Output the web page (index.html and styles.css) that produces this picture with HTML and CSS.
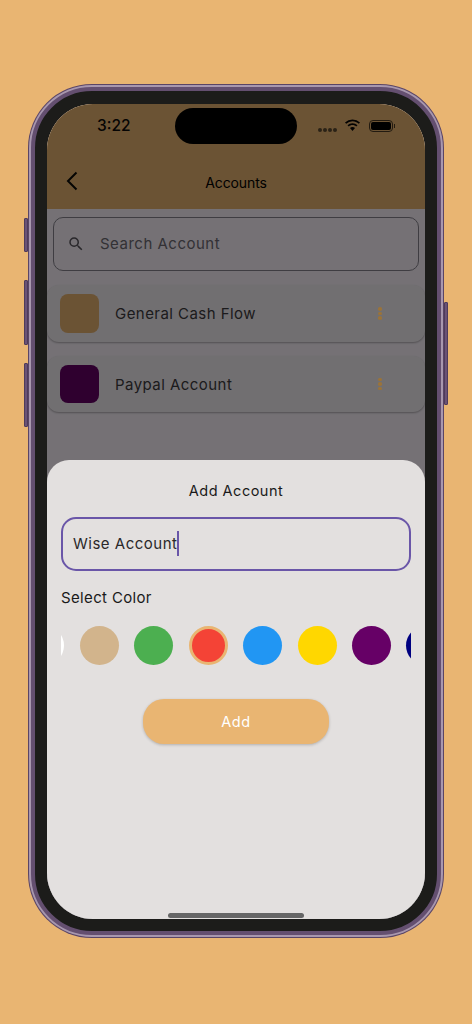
FILE: index.html
```html
<!DOCTYPE html>
<html lang="en">
<head>
<meta charset="utf-8">
<title>Accounts</title>
<link rel="stylesheet" href="styles.css">
</head>
<body>
<div class="phone">
  <span class="side-btn btn-action"></span>
  <span class="side-btn btn-vol-up"></span>
  <span class="side-btn btn-vol-down"></span>
  <span class="side-btn btn-power"></span>
  <div class="ring">
    <div class="bezel">
      <div class="display">
        <header class="appbar">
          <div class="status">
            <span class="time">3:22</span>
            <div class="status-icons">
              <span class="signal"><i></i><i></i><i></i><i></i></span>
              <svg class="wifi" viewBox="0 0 17 13" width="17" height="13"><path d="M8.500 2.300c2.400 0 4.600.9 6.300 2.500l1.200-1.300A10.900 10.900 0 0 0 8.500.5 10.900 10.900 0 0 0 1 3.500l1.200 1.300a9.100 9.100 0 0 1 6.300-2.500z"/><path d="M8.500 6c1.400 0 2.700.5 3.700 1.500l1.300-1.300A7.200 7.200 0 0 0 8.500 4.200a7.200 7.200 0 0 0-5 2l1.300 1.300c1-1 2.300-1.500 3.700-1.500z"/><path d="M8.500 8a3.700 3.700 0 0 0-2.500 1l2.500 3 2.500-3a3.700 3.700 0 0 0-2.500-1z"/></svg>
              <span class="battery"><span class="battery-fill"></span></span>
            </div>
          </div>
          <div class="titlebar">
            <svg class="back" viewBox="0 0 12 20" width="12" height="20"><path d="M10.500 1.500 2 10l8.500 8.500" fill="none" stroke="#0d0b08" stroke-width="2"/></svg>
            <h1>Accounts</h1>
          </div>
        </header>
        <main class="content">
          <div class="search">
            <svg viewBox="0 0 24 24" width="18" height="18"><path fill="#5a565e" d="M15.500 14h-.79l-.28-.27A6.470 6.470 0 0 0 16 9.500 6.500 6.500 0 1 0 9.500 16c1.610 0 3.090-.59 4.230-1.570l.27.28v.79l5 4.990L20.490 19l-4.990-5zm-6 0C7.010 14 5 11.990 5 9.500S7.010 5 9.500 5 14 7.010 14 9.500 11.990 14 9.500 14z"/></svg>
            <span>Search Account</span>
          </div>
          <div class="card">
            <span class="swatch swatch-tan"></span>
            <span class="card-name">General Cash Flow</span>
            <span class="menu"><i></i><i></i><i></i></span>
          </div>
          <div class="card card-short">
            <span class="swatch swatch-purple"></span>
            <span class="card-name">Paypal Account</span>
            <span class="menu"><i></i><i></i><i></i></span>
          </div>
        </main>
        <div class="scrim"></div>
        <section class="sheet">
          <h2>Add Account</h2>
          <div class="field"><span>Wise Account</span><span class="caret"></span></div>
          <h3>Select Color</h3>
          <div class="colors">
            <span class="dot c-white"></span>
            <span class="dot c-tan"></span>
            <span class="dot c-green"></span>
            <span class="dot c-red"></span>
            <span class="dot c-blue"></span>
            <span class="dot c-yellow"></span>
            <span class="dot c-purple"></span>
            <span class="dot c-navy"></span>
          </div>
          <button class="add" type="button">Add</button>
        </section>
        <span class="island"></span>
        <span class="home"></span>
      </div>
    </div>
  </div>
</div>
</body>
</html>
```
FILE: styles.css
```css
* { box-sizing: border-box; }
html, body { margin: 0; height: 100%; }
body {
  background: #e9b572;
  font-family: Inter, "Noto Sans", sans-serif;
  padding: 84px 28px 86px;
  overflow: hidden;
}
.phone {
  position: relative;
  width: 416px;
  height: 854px;
  border-radius: 64px;
  padding: 1px;
  background: #5a4566;
}
.ring {
  height: 100%;
  padding: 2px;
  border-radius: 63px;
  background: #a897ae;
}
.side-btn {
  position: absolute;
  width: 4px;
  background: #6a5276;
  border: 1px solid #4f3b5a;
  border-radius: 1px;
}
.btn-action { left: -4px; top: 134px; height: 34px; }
.btn-vol-up { left: -4px; top: 196px; height: 65px; }
.btn-vol-down { left: -4px; top: 279px; height: 64px; }
.btn-power { right: -4px; top: 218px; height: 103px; }
.bezel {
  height: 100%;
  padding: 13px 12px 12px;
  background: #1c1c1a;
  border: 4px solid #644f70;
  border-radius: 61px;
}
.display {
  position: relative;
  height: 100%;
  display: flex;
  flex-direction: column;
  overflow: hidden;
  border-radius: 46px;
  background: #fef7ff;
}
.appbar {
  background: #e9b572;
  height: 105px;
  flex: none;
  display: flex;
  flex-direction: column;
}
.status {
  display: flex;
  justify-content: space-between;
  align-items: center;
  height: 48px;
  padding: 0 32px 6px 50px;
}
.time { font-size: 15.500px; font-weight: 500; color: #0b0a08; }
.status-icons { display: flex; align-items: center; gap: 7px; margin-top: 2px; }
.signal { display: flex; gap: 1px; margin-top: 7px; }
.signal i { width: 4px; height: 4px; border-radius: 50%; background: #5c4a30; }
.wifi { fill: #050505; margin-top: -1px; }
.battery {
  position: relative;
  width: 24px;
  height: 12px;
  margin-left: 1px;
  border: 1px solid #4a3a24;
  border-radius: 4px;
  padding: 1px;
  display: block;
}
.battery::after {
  content: "";
  position: absolute;
  right: -3px;
  top: 3px;
  width: 1px;
  height: 4px;
  background: #4a3a24;
}
.battery-fill { display: block; height: 100%; background: #000; border-radius: 2px; }
.titlebar {
  position: relative;
  flex: 1;
  display: flex;
  align-items: center;
  justify-content: center;
  padding-top: 4px;
}
.back { position: absolute; left: 19px; top: 19px; }
h1 { margin: 0; font-size: 14px; font-weight: 400; letter-spacing: -.1px; color: #000; }
.content {
  flex: 1;
  padding-top: 8px;
}
.search {
  margin: 0 6px;
  height: 54px;
  border: 1px solid #8a8590;
  border-radius: 10px;
  display: flex;
  align-items: center;
  padding: 0 0 0 13px;
  gap: 15px;
  font-size: 15px;
  letter-spacing: .5px;
  color: #6f6b75;
}
.search span { padding-bottom: 1px; }
.card {
  margin-top: 14px;
  height: 57px;
  background: #f7f2f7;
  border-radius: 12px;
  box-shadow: 0 1px 2px rgba(0, 0, 0, .3);
  display: flex;
  align-items: center;
  padding: 0 43.500px 0 13px;
}
.card-short { height: 56px; }
.swatch { width: 39px; height: 38.500px; border-radius: 8px; }
.swatch-tan { background: #e9b572; }
.swatch-purple { background: #660066; }
.card-name {
  flex: 1;
  margin-left: 16px;
  font-size: 15px;
  letter-spacing: .45px;
  color: #3e3c40;
}
.menu {
  position: relative;
  z-index: 1;
  display: flex;
  flex-direction: column;
  gap: 1px;
}
.menu i { width: 3.500px; height: 3.500px; border-radius: 50%; background: #9a733a; }
.scrim {
  position: absolute;
  inset: 0;
  background: rgba(0, 0, 0, .54);
}
.sheet {
  position: absolute;
  left: 0;
  right: 0;
  top: 356px;
  bottom: 0;
  z-index: 2;
  background: #e3e0df;
  border-radius: 22px 22px 0 0;
  padding: 22px 14px 0;
  display: flex;
  flex-direction: column;
}
h2 {
  margin: 0;
  text-align: center;
  font-size: 14.500px;
  line-height: 17px;
  font-weight: 400;
  letter-spacing: .5px;
  color: #1a1a1a;
}
.field {
  margin-top: 18px;
  height: 54px;
  border: 2px solid #6a56a8;
  border-radius: 15px;
  padding: 0 0 2px 10px;
  display: flex;
  align-items: center;
  font-size: 15px;
  letter-spacing: .5px;
  color: #2a282a;
}
.caret { width: 2px; height: 25px; background: #6a56a8; }
h3 {
  margin: 18px 0 0;
  font-size: 15px;
  line-height: 18px;
  font-weight: 400;
  letter-spacing: .35px;
  color: #1a1a1a;
}
.colors {
  margin-top: 19px;
  display: flex;
  gap: 15.450px;
  overflow: hidden;
}
.dot { flex: none; width: 39px; height: 39px; border-radius: 50%; }
.c-white { background: #fff; margin-left: -35.600px; }
.c-tan { background: #d2b48c; }
.c-green { background: #4caf50; }
.c-red { background: #f44336; border: 3px solid #e9b572; }
.c-blue { background: #2196f3; }
.c-yellow { background: #ffd700; }
.c-purple { background: #660066; }
.c-navy { background: #000080; }
.add {
  align-self: center;
  margin-top: 34px;
  width: 186px;
  height: 45px;
  border: 0;
  border-radius: 21px;
  background: #e9b572;
  color: #fff;
  font: 400 14.500px Inter, sans-serif;
  letter-spacing: .5px;
  box-shadow: 0 1px 3px rgba(0, 0, 0, .22);
}
.island {
  position: absolute;
  left: 128px;
  top: 4px;
  z-index: 3;
  width: 122px;
  height: 36px;
  border-radius: 18px;
  background: #000;
}
.home {
  position: absolute;
  left: 121px;
  bottom: 1px;
  z-index: 3;
  width: 136px;
  height: 5px;
  border-radius: 3px;
  background: #666;
}
```
